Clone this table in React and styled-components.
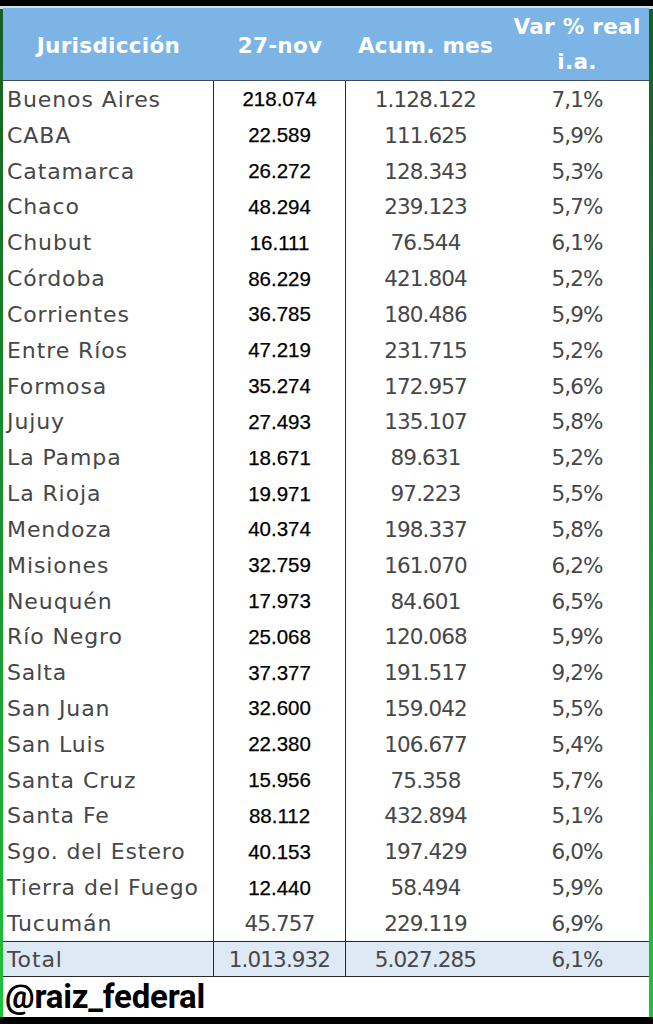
import styled, { createGlobalStyle } from 'styled-components';

const GlobalStyle = createGlobalStyle`
  html, body {
    margin: 0;
    padding: 0;
    background: #000;
  }
`

const rows = [
  ['Buenos Aires', '218.074', '1.128.122', '7,1%'],
  ['CABA', '22.589', '111.625', '5,9%'],
  ['Catamarca', '26.272', '128.343', '5,3%'],
  ['Chaco', '48.294', '239.123', '5,7%'],
  ['Chubut', '16.111', '76.544', '6,1%'],
  ['Córdoba', '86.229', '421.804', '5,2%'],
  ['Corrientes', '36.785', '180.486', '5,9%'],
  ['Entre Ríos', '47.219', '231.715', '5,2%'],
  ['Formosa', '35.274', '172.957', '5,6%'],
  ['Jujuy', '27.493', '135.107', '5,8%'],
  ['La Pampa', '18.671', '89.631', '5,2%'],
  ['La Rioja', '19.971', '97.223', '5,5%'],
  ['Mendoza', '40.374', '198.337', '5,8%'],
  ['Misiones', '32.759', '161.070', '6,2%'],
  ['Neuquén', '17.973', '84.601', '6,5%'],
  ['Río Negro', '25.068', '120.068', '5,9%'],
  ['Salta', '37.377', '191.517', '9,2%'],
  ['San Juan', '32.600', '159.042', '5,5%'],
  ['San Luis', '22.380', '106.677', '5,4%'],
  ['Santa Cruz', '15.956', '75.358', '5,7%'],
  ['Santa Fe', '88.112', '432.894', '5,1%'],
  ['Sgo. del Estero', '40.153', '197.429', '6,0%'],
  ['Tierra del Fuego', '12.440', '58.494', '5,9%'],
  ['Tucumán', '45.757', '229.119', '6,9%'],
]

const Screen = styled.div`
  width: 653px;
  height: 1024px;
  background: #000;
  padding-top: 6px;
  box-sizing: border-box;
`

const Frame = styled.div`
  display: flex;
  flex-direction: column;
  border-style: solid;
  border-width: 2px 4px 0 3px;
  border-image: linear-gradient(to bottom, #cfe3e6 0, #cfe3e6 2px, #155f22 2px, #1fc23a 100%) 1;
  background: #fff;
  height: 1011px;
  box-sizing: border-box;
`

const Grid = styled.div`
  display: grid;
  grid-template-columns: 211px 132px 159px 1fr;
`

const HeadCell = styled.div`
  height: 73px;
  background: #7cb4e6;
  border-bottom: 1px solid #3b4a5a;
  box-sizing: border-box;
  display: flex;
  align-items: center;
  justify-content: center;
  text-align: center;
  color: #fff;
  font-family: 'DejaVu Sans', sans-serif;
  font-weight: bold;
  font-size: 21.5px;
  line-height: 35px;
  letter-spacing: 0.3px;
  padding-top: ${p => (p.$tall ? '0' : '2px')};
`

const Cell = styled.div`
  height: ${p => (p.$total ? '36px' : '35.83px')};
  box-sizing: border-box;
  display: flex;
  align-items: center;
  justify-content: ${p => (p.$left ? 'flex-start' : 'center')};
  padding-left: ${p => (p.$left ? '4px' : '0')};
  padding-top: 1px;
  border-right: ${p => (p.$divider ? '1px solid #2a2a2a' : 'none')};
  background: ${p => (p.$total ? '#ddeaf6' : '#fff')};
  border-top: ${p => (p.$total ? '1px solid #2a2a2a' : 'none')};
  border-bottom: ${p => (p.$total ? '1px solid #2a2a2a' : 'none')};
  color: #474747;
  font-family: 'DejaVu Sans', sans-serif;
  font-size: ${p => (p.$left ? '22px' : '21.5px')};
  letter-spacing: ${p => (p.$left ? '0.9px' : '-0.9px')};
  white-space: nowrap;
`

const BoldCell = styled(Cell)`
  font-family: 'Liberation Sans', Arial, sans-serif;
  font-size: 20.5px;
  color: #000;
  letter-spacing: 0;
  -webkit-text-stroke: 0.25px #000;
`

const Footer = styled.div`
  height: 40px;
  display: flex;
  align-items: center;
  padding-left: 2px;
  font-family: Roboto, 'Liberation Sans', sans-serif;
  font-weight: bold;
  font-size: 33px;
  letter-spacing: -0.2px;
  color: #000;
`

export default function App() {
  return (
    <Screen>
      <GlobalStyle />
      <Frame>
        <Grid>
          <HeadCell>Jurisdicción</HeadCell>
          <HeadCell>27-nov</HeadCell>
          <HeadCell>Acum. mes</HeadCell>
          <HeadCell $tall>Var % real<br />i.a.</HeadCell>
          {rows.map(([name, day, month, pct], i) => {
            const Day = i === rows.length - 1 ? Cell : BoldCell;
            return [
              <Cell key={name + 'a'} $left $divider>{name}</Cell>,
              <Day key={name + 'b'} $divider>{day}</Day>,
              <Cell key={name + 'c'}>{month}</Cell>,
              <Cell key={name + 'd'}>{pct}</Cell>,
            ];
          })}
          <Cell $left $divider $total>Total</Cell>
          <Cell $divider $total>1.013.932</Cell>
          <Cell $total>5.027.285</Cell>
          <Cell $total>6,1%</Cell>
        </Grid>
        <Footer>@raiz_federal</Footer>
      </Frame>
    </Screen>
  );
}
